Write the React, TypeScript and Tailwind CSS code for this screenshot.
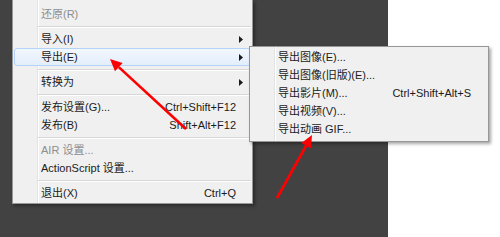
import React from "react";

type Item =
  | { kind: "sep" }
  | { kind: "item"; label: string; shortcut?: string; disabled?: boolean; sub?: boolean; active?: boolean };

const mainItems: Item[] = [
  { kind: "item", label: "还原(R)", disabled: true },
  { kind: "sep" },
  { kind: "item", label: "导入(I)", sub: true },
  { kind: "item", label: "导出(E)", sub: true, active: true },
  { kind: "sep" },
  { kind: "item", label: "转换为", sub: true },
  { kind: "sep" },
  { kind: "item", label: "发布设置(G)...", shortcut: "Ctrl+Shift+F12" },
  { kind: "item", label: "发布(B)", shortcut: "Shift+Alt+F12" },
  { kind: "sep" },
  { kind: "item", label: "AIR 设置...", disabled: true },
  { kind: "item", label: "ActionScript 设置..." },
  { kind: "sep" },
  { kind: "item", label: "退出(X)", shortcut: "Ctrl+Q" },
];

const subItems: Item[] = [
  { kind: "item", label: "导出图像(E)..." },
  { kind: "item", label: "导出图像(旧版)(E)..." },
  { kind: "item", label: "导出影片(M)...", shortcut: "Ctrl+Shift+Alt+S" },
  { kind: "item", label: "导出视频(V)..." },
  { kind: "item", label: "导出动画 GIF..." },
];

function SubArrow() {
  return (
    <svg width="4" height="7" viewBox="0 0 4 7" className="absolute right-[7px] top-[5px]">
      <path d="M0 0 L4 3.5 L0 7 Z" fill="#1a1a1a" />
    </svg>
  );
}

function MainRow({ item }: { item: Item }) {
  if (item.kind === "sep") {
    return (
      <div className="h-[7px] flex flex-col justify-center pl-[24px]">
        <div className="h-px bg-[#d7d7d7]" />
        <div className="h-px bg-white" />
      </div>
    );
  }
  return (
    <div
      className={
        "relative h-[18px] flex items-center pl-[26px] pr-[14px] rounded-[3px] border " +
        (item.active
          ? "border-[#b4d3f8] bg-gradient-to-b from-[#f2f7fe] to-[#e3eefb]"
          : "border-transparent")
      }
    >
      <span className={"flex-1 " + (item.disabled ? "text-[#8d8d8d]" : "text-[#1b1b1b]")}>{item.label}</span>
      {item.shortcut && <span className="text-[#1b1b1b]">{item.shortcut}</span>}
      {item.sub && <SubArrow />}
    </div>
  );
}

function SubRow({ item }: { item: Item }) {
  if (item.kind === "sep") return null;
  return (
    <div className="h-[18px] flex items-center pl-[27px] pr-[16px]">
      <span className="flex-1 text-[#1b1b1b]">{item.label}</span>
      {item.shortcut && <span className="text-[#1b1b1b]">{item.shortcut}</span>}
    </div>
  );
}

export default function App() {
  return (
    <div
      className="relative w-[500px] h-[237px] overflow-hidden flex text-[11px] leading-none"
      style={{ fontFamily: '"Liberation Sans", "Noto Sans CJK SC", sans-serif' }}
    >
      {/* dark canvas */}
      <div className="w-[388px] h-full bg-[#424242] flex items-start pl-[12px]">
        {/* main menu */}
        <div className="relative w-[241px] h-[204px] bg-[#f0f0f0] border-l border-r border-b border-[#979797] shadow-[2px_2px_3px_rgba(0,0,0,0.35)] pt-[5px] px-[1px]">
          <div className="absolute left-[24px] top-0 bottom-0 w-px bg-[#e2e3e3]" />
          <div className="absolute left-[25px] top-0 bottom-0 w-px bg-white" />
          <div className="relative">
            {mainItems.map((it, i) => (
              <MainRow key={i} item={it} />
            ))}
          </div>
        </div>
      </div>
      <div className="flex-1 h-full bg-white" />

      {/* submenu */}
      <div className="absolute left-[249px] top-[46px] w-[240px] h-[96px] bg-[#f0f0f0] border border-[#979797] shadow-[2px_2px_3px_rgba(0,0,0,0.35)] py-[1px] px-[1px]">
        <div className="absolute left-[24px] top-0 bottom-0 w-px bg-[#e2e3e3]" />
        <div className="absolute left-[25px] top-0 bottom-0 w-px bg-white" />
        <div className="relative">
          {subItems.map((it, i) => (
            <SubRow key={i} item={it} />
          ))}
        </div>
      </div>

      {/* red arrows */}
      <svg className="absolute left-0 top-0 pointer-events-none" width="500" height="237">
        <line x1="186" y1="129" x2="118.8" y2="67.1" stroke="#ff0000" strokeWidth="2.6" />
        <polygon points="110,59 122.6,63.1 115,71.2" fill="#ff0000" />
        <line x1="277" y1="198" x2="306.2" y2="145.5" stroke="#ff0000" strokeWidth="2.6" />
        <polygon points="312,135 311,148.2 301.4,142.9" fill="#ff0000" />
      </svg>
    </div>
  );
}
